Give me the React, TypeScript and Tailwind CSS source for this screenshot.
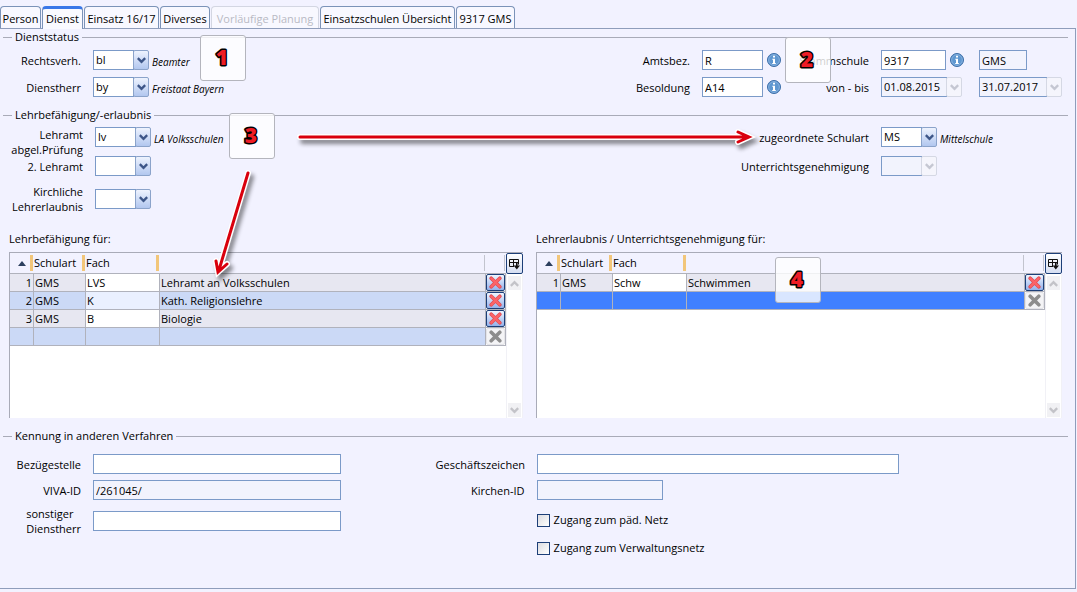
import type { ReactNode } from 'react';
import clsx from 'clsx';

const tabs = [
  { label: 'Person', width: 'w-[41px]' },
  { label: 'Dienst', width: 'w-[41px]', active: true },
  { label: 'Einsatz 16/17', width: 'w-[75px]' },
  { label: 'Diverses', width: 'w-[50px]' },
  { label: 'Vorläufige Planung', width: 'w-[108px]', disabled: true },
  { label: 'Einsatzschulen Übersicht', width: 'w-[135px]' },
  { label: '9317 GMS', width: 'w-[59px]' },
];

const TabBar = () => (
  <nav className="flex h-7 items-end gap-px pt-1.5">
    {tabs.map((tab) => (
      <button
        key={tab.label}
        disabled={tab.disabled}
        className={clsx(
          'shrink-0 rounded-t-sm border border-b-0 text-center text-[11px] whitespace-nowrap',
          tab.width,
          tab.active && 'relative -mb-px h-[23px] border-t-[3px] border-[#7b93b8] border-t-[#3a78e8] bg-[#fafaff] leading-4',
          tab.disabled && 'h-[22px] border-[#d3d6e2] bg-[#f8f8ff] pt-0.5 leading-5 text-[#b9bac4]',
          !tab.active && !tab.disabled && 'h-[22px] border-[#7b93b8] bg-[#f8f8ff] pt-0.5 leading-5',
        )}
      >
        {tab.label}
      </button>
    ))}
  </nav>
);

const SectionTitle = ({ children }: { children: ReactNode }) => (
  <div className="flex h-4 items-center gap-[3px] pr-[7px] pl-[3px]">
    <span className="h-px w-[9px] bg-[#a9abb8]" />
    <h2 className="leading-4 whitespace-nowrap">{children}</h2>
    <span className="h-px flex-1 bg-[#a9abb8]" />
  </div>
);

const Chevron = ({ color }: { color: string }) => (
  <svg width="9" height="7" viewBox="0 0 9 7" fill="none" stroke={color} strokeWidth="2.4">
    <path d="M.8 1.2 4.5 4.9 8.2 1.2" />
  </svg>
);

type ComboProps = { id: string; value?: string; width?: string; disabled?: boolean; label?: string };

const Combo = ({ id, value = '', width = 'w-14', disabled, label }: ComboProps) => (
  <span className={clsx('relative flex h-5 shrink-0', width)}>
    <select
      id={id}
      aria-label={label}
      disabled={disabled}
      defaultValue={value}
      className={clsx(
        'mr-[15px] h-5 w-full appearance-none border border-[#7b9ac8] pl-0.5 text-[11px] leading-4 text-black opacity-100',
        disabled ? 'bg-[#f2f3fd]' : 'bg-white',
      )}
    >
      <option>{value}</option>
    </select>
    <span
      className={clsx(
        'pointer-events-none absolute top-0 right-0 flex h-5 w-4 items-center justify-center rounded-[2px] border',
        disabled ? 'border-[#d5d8e4] bg-[#f5f5fc]' : 'border-[#8ba3ca] bg-linear-to-b from-[#eef3fe] to-[#b2c7ef]',
      )}
    >
      <Chevron color={disabled ? '#c5c7d2' : '#3d5688'} />
    </span>
  </span>
);

type FieldProps = { id: string; value?: string; width: string; readOnly?: boolean; label?: string };

const Field = ({ id, value = '', width, readOnly, label }: FieldProps) => (
  <input
    id={id}
    aria-label={label}
    defaultValue={value}
    readOnly={readOnly}
    className={clsx(
      'h-5 border border-[#7b9ac8] px-0.5 text-[11px] leading-4',
      width,
      readOnly ? 'bg-[#f2f3fd]' : 'bg-white',
    )}
  />
);

const InfoButton = () => (
  <button aria-label="Info" className="shrink-0">
    <svg width="14" height="14" viewBox="0 0 14 14">
      <circle cx="7" cy="7" r="6.5" fill="#4f88c4" stroke="#3c6ea8" />
      <circle cx="7" cy="7" r="5.4" fill="#5f97d0" stroke="#9dc2e8" strokeWidth="0.7" />
      <path d="M6 2.8h2v1.7H6zM5.3 5.7H8v4.2h.8v1H5.2v-1H6V6.7h-.7z" fill="#fff" />
    </svg>
  </button>
);

const Label = ({ id, width, children }: { id: string; width: string; children: ReactNode }) => (
  <label htmlFor={id} className={clsx('shrink-0 text-right leading-[15px]', width)}>
    {children}
  </label>
);

const Note = ({ children }: { children: ReactNode }) => (
  <em className="-ml-[9px] h-5 pt-0.5 text-[10px] leading-5 whitespace-nowrap">{children}</em>
);

const DeleteButton = ({ disabled }: { disabled?: boolean }) => (
  <button
    aria-label="Zeile löschen"
    disabled={disabled}
    className={clsx(
      'flex h-[17px] w-[19px] items-center justify-center rounded-[2px] border',
      disabled ? 'border-[#e4e4e8] bg-[#f4f4f6]' : 'border-[#1d3f78] bg-linear-to-b from-[#f0f5ff] to-[#94b2ea]',
    )}
  >
    <svg width="13" height="13" viewBox="0 0 13 13" strokeLinecap="round">
      <path d="M2.2 2.2 10.8 10.8M10.8 2.2 2.2 10.8" stroke={disabled ? '#8d8d8d' : '#e0484e'} strokeWidth="3.6" />
      {!disabled && <path d="M2.4 2.4 10.6 10.6M10.6 2.4 2.4 10.6" stroke="#fb6468" strokeWidth="2.4" />}
    </svg>
  </button>
);

const ScrollButton = ({ down }: { down?: boolean }) => (
  <button
    aria-label={down ? 'Nach unten' : 'Nach oben'}
    className="flex h-[14px] w-[13px] items-center justify-center bg-[#f1f1f4]"
  >
    <span className={down ? '' : 'rotate-180'}>
      <Chevron color="#c3c3c8" />
    </span>
  </button>
);

const ColumnsButton = () => (
  <button
    aria-label="Spalten auswählen"
    className="flex h-[21px] w-[17px] items-center justify-center rounded-[2px] border border-[#1d3f78] bg-linear-to-b from-white to-[#d5def2]"
  >
    <svg width="11" height="12" viewBox="0 0 11 12" fill="none" stroke="#111">
      <path d="M5 8.5H.5v-7h9v5M.5 4.5h9M4.5 1.5v7" />
      <path d="M7 5h1.6v2.5H11L7.8 11.4 4.6 7.5H7z" fill="#111" stroke="none" />
    </svg>
  </button>
);

type Row = { schulart: string; fach: string; name: string };

const rowTint = (index: number, filled: boolean, highlightEmpty?: boolean) => {
  if (!filled && highlightEmpty) return 'bg-[#4080ff]';
  return index % 2 ? 'bg-[#cbd9f6]' : 'bg-[#e7e7f1]';
};

const cell = 'overflow-hidden border-r border-b border-[#b0b2bc] px-px whitespace-nowrap';
const headCell = 'border-b border-[#b0b2bc] p-0 pr-px font-normal';

const ColumnHandle = () => <span className="h-4 w-[3px] bg-[#f2c67a]" />;

const SubjectTable = ({ title, rows, highlightEmpty }: { title: string; rows: Row[]; highlightEmpty?: boolean }) => {
  const lines = [...rows, { schulart: '', fach: '', name: '' }];

  return (
    <div className="min-w-0">
      <h3 className="h-[21px] leading-4">{title}</h3>
      <div className="flex h-[166px] border-t border-l border-[#a9abb8]">
        <div className="min-w-0 flex-1 bg-white">
          <table className="w-full table-fixed border-separate border-spacing-0">
            <colgroup>
              <col className="w-6" />
              <col className="w-[52px]" />
              <col className="w-[74px]" />
              <col />
              <col className="w-5" />
            </colgroup>
            <thead>
              <tr className="h-[21px] bg-[#f2f2ff] text-left">
                <th className={headCell}>
                  <span className="flex items-center justify-end gap-1">
                    <svg width="8" height="5" viewBox="0 0 8 5" fill="#2c3f5e">
                      <path d="M0 5 4 0l4 5z" />
                    </svg>
                    <ColumnHandle />
                  </span>
                </th>
                <th className={headCell}>
                  <span className="flex items-center justify-between leading-4">
                    Schulart <ColumnHandle />
                  </span>
                </th>
                <th className={headCell}>
                  <span className="flex items-center justify-between leading-4">
                    Fach <ColumnHandle />
                  </span>
                </th>
                <th className={headCell}>
                  <span className="ml-auto block h-4 w-px bg-[#c2c4ce]" />
                </th>
                <th className={headCell}>
                  <span className="ml-auto block h-4 w-px bg-[#c2c4ce]" />
                </th>
              </tr>
            </thead>
            <tbody>
              {lines.map((row, i) => {
                const filled = row.fach !== '';
                return (
                  <tr key={i} className={clsx('h-[18px] leading-[17px]', rowTint(i, filled, highlightEmpty))}>
                    <td className={clsx(cell, 'text-right')}>{filled && i + 1}</td>
                    <td className={cell}>{row.schulart}</td>
                    <td className={clsx(cell, filled && (i % 2 ? 'bg-[#eaf0ff]' : 'bg-white'))}>{row.fach}</td>
                    <td className={cell}>{row.name}</td>
                    <td className="border-r border-b border-[#b0b2bc] bg-white p-0">
                      <DeleteButton disabled={!filled} />
                    </td>
                  </tr>
                );
              })}
            </tbody>
          </table>
        </div>
        <div className="flex w-[17px] flex-col bg-white">
          <div className="bg-[#f2f2ff]">
            <ColumnsButton />
          </div>
          <div className="flex flex-1 flex-col items-center justify-between border-x border-[#f1f1f6] pt-0.5 pb-px">
            <ScrollButton />
            <ScrollButton down />
          </div>
        </div>
      </div>
    </div>
  );
};

const Checkbox = ({ id, children }: { id: string; children: ReactNode }) => (
  <div className="flex items-center gap-1">
    <input
      id={id}
      type="checkbox"
      className="h-[13px] w-[13px] appearance-none border border-[#1d3f78] bg-linear-to-br from-[#dcdce0] to-white checked:bg-[#1d3f78]"
    />
    <label htmlFor={id} className="leading-4">
      {children}
    </label>
  </div>
);

const Marker = ({ digit, place }: { digit: string; place: string }) => (
  <div className={clsx('absolute h-[46px] w-[46px] rounded-[3px] border border-[#b4b5bd] bg-white/80', place)}>
    <svg width="44" height="44" viewBox="0 0 44 44" className="font-['Open_Sans',sans-serif]">
      <text
        x="21"
        y="29"
        textAnchor="middle"
        fontSize="21"
        fontWeight="800"
        fill="#ee1c25"
        stroke="#000"
        strokeWidth="3"
        strokeLinejoin="round"
        paintOrder="stroke"
      >
        {digit}
      </text>
    </svg>
  </div>
);

const arrows = ['M300 137H748M738 132 749 137 738 142', 'M248 173 219 270M216 261 218 272 227 264'];

const Annotations = () => (
  <div className="pointer-events-none absolute inset-0">
    <svg className="absolute top-0 left-0" width="1077" height="592" fill="none" strokeLinecap="round">
      <g className="drop-shadow-[3px_4px_2px_rgba(0,0,0,0.45)]">
        {arrows.map((d) => (
          <path key={d} d={d} stroke="#fff" strokeWidth="6" />
        ))}
      </g>
      {arrows.map((d) => (
        <path key={d} d={d} stroke="#d9000d" strokeWidth="3" />
      ))}
    </svg>
    <Marker digit="1" place="left-[200px] top-[35px]" />
    <Marker digit="2" place="left-[785px] top-[37px]" />
    <Marker digit="3" place="left-[229px] top-[113px]" />
    <Marker digit="4" place="left-[775px] top-[257px]" />
  </div>
);

export default function App() {
  return (
    <div className="relative min-h-screen bg-[#f2f2ff] pr-px pb-[3px] font-['Open_Sans','Noto_Sans',sans-serif] text-[11px] text-black">
      <TabBar />
      <main className="min-h-[561px] border-t border-r border-b border-[#8f9dbb]">
        <section>
          <SectionTitle>Dienststatus</SectionTitle>
          <div className="flex flex-col gap-[7px] pt-[5px] pr-[13px]">
            <div className="flex items-center gap-3">
              <Label id="rechtsverh" width="w-[81px]">Rechtsverh.</Label>
              <Combo id="rechtsverh" value="bl" />
              <Note>Beamter</Note>
              <div className="ml-auto flex items-center gap-3">
                <Label id="amtsbez" width="w-[80px]">Amtsbez.</Label>
                <div className="flex w-[75px] items-center gap-1">
                  <Field id="amtsbez" value="R" width="w-[61px]" />
                  <InfoButton />
                </div>
                <Label id="stammschule" width="w-[80px]">Stammschule</Label>
                <div className="flex w-[181px] items-center">
                  <Field id="stammschule" value="9317" width="w-[65px]" />
                  <span className="flex w-[33px] pl-1">
                    <InfoButton />
                  </span>
                  <Field id="schulart" label="Schulart der Stammschule" value="GMS" width="w-12" readOnly />
                </div>
              </div>
            </div>
            <div className="flex items-center gap-3">
              <Label id="dienstherr" width="w-[81px]">Dienstherr</Label>
              <Combo id="dienstherr" value="by" />
              <Note>Freistaat Bayern</Note>
              <div className="ml-auto flex items-center gap-3">
                <Label id="besoldung" width="w-[80px]">Besoldung</Label>
                <div className="flex w-[75px] items-center gap-1">
                  <Field id="besoldung" value="A14" width="w-[61px]" />
                  <InfoButton />
                </div>
                <Label id="von" width="w-[80px]">von - bis</Label>
                <div className="flex w-[181px] items-center justify-between">
                  <Combo id="von" value="01.08.2015" width="w-[81px]" disabled />
                  <Combo id="bis" label="bis" value="31.07.2017" width="w-[83px]" disabled />
                </div>
              </div>
            </div>
          </div>
        </section>

        <section className="pt-[10px]">
          <SectionTitle>Lehrbefähigung/-erlaubnis</SectionTitle>
          <div className="flex justify-between pt-1 pr-[13px]">
            <div>
              <div className="flex h-[29px] items-start gap-3">
                <Label id="lehramt" width="w-[83px]">
                  Lehramt
                  <br />
                  abgel.Prüfung
                </Label>
                <Combo id="lehramt" value="lv" />
                <Note>LA Volksschulen</Note>
              </div>
              <div className="flex h-7 items-start gap-3">
                <Label id="lehramt2" width="w-[83px] pt-[3px]">2. Lehramt</Label>
                <Combo id="lehramt2" />
              </div>
              <div className="flex items-center gap-3">
                <Label id="kirchlich" width="w-[83px]">
                  Kirchliche
                  <br />
                  Lehrerlaubnis
                </Label>
                <Combo id="kirchlich" />
              </div>
            </div>
            <div className="flex flex-col gap-[9px]">
              <div className="flex items-center gap-3">
                <Label id="zugeordnet" width="w-[140px]">zugeordnete Schulart</Label>
                <div className="flex w-[181px] gap-3">
                  <Combo id="zugeordnet" value="MS" />
                  <Note>Mittelschule</Note>
                </div>
              </div>
              <div className="flex items-center gap-3">
                <Label id="genehmigung" width="w-[140px]">Unterrichtsgenehmigung</Label>
                <Combo id="genehmigung" disabled />
              </div>
            </div>
          </div>
        </section>

        <section className="grid grid-cols-[514fr_526fr] gap-[13px] pt-[17px] pr-[13px] pl-[9px]">
          <SubjectTable
            title="Lehrbefähigung für:"
            rows={[
              { schulart: 'GMS', fach: 'LVS', name: 'Lehramt an Volksschulen' },
              { schulart: 'GMS', fach: 'K', name: 'Kath. Religionslehre' },
              { schulart: 'GMS', fach: 'B', name: 'Biologie' },
            ]}
          />
          <SubjectTable
            title="Lehrerlaubnis / Unterrichtsgenehmigung für:"
            rows={[{ schulart: 'GMS', fach: 'Schw', name: 'Schwimmen' }]}
            highlightEmpty
          />
        </section>

        <section className="pt-[10px]">
          <SectionTitle>Kennung in anderen Verfahren</SectionTitle>
          <div className="grid grid-cols-[424fr_638fr] gap-3 pt-[10px] pr-[2px]">
            <div className="flex flex-col gap-1.5">
              <div className="flex items-center gap-3">
                <Label id="bezuege" width="w-[81px]">Bezügestelle</Label>
                <Field id="bezuege" width="w-[248px]" />
              </div>
              <div className="flex items-center gap-3">
                <Label id="viva" width="w-[81px]">VIVA-ID</Label>
                <Field id="viva" value="/261045/" width="w-[248px]" readOnly />
              </div>
              <div className="flex items-center gap-3">
                <Label id="sonstiger" width="w-[81px]">
                  <span className="inline-block text-left">
                    sonstiger
                    <br />
                    Dienstherr
                  </span>
                </Label>
                <Field id="sonstiger" width="w-[248px]" />
              </div>
            </div>
            <div className="flex flex-col gap-1.5">
              <div className="flex items-center gap-3">
                <Label id="geschaeft" width="w-[89px]">Geschäftszeichen</Label>
                <Field id="geschaeft" width="w-[362px]" />
              </div>
              <div className="flex items-center gap-3">
                <Label id="kirchenid" width="w-[89px]">Kirchen-ID</Label>
                <Field id="kirchenid" width="w-[126px]" readOnly />
              </div>
              <div className="flex flex-col gap-3 pt-1.5 pl-[101px]">
                <Checkbox id="paed">Zugang zum päd. Netz</Checkbox>
                <Checkbox id="verwaltung">Zugang zum Verwaltungsnetz</Checkbox>
              </div>
            </div>
          </div>
        </section>
      </main>
      <Annotations />
    </div>
  );
}
